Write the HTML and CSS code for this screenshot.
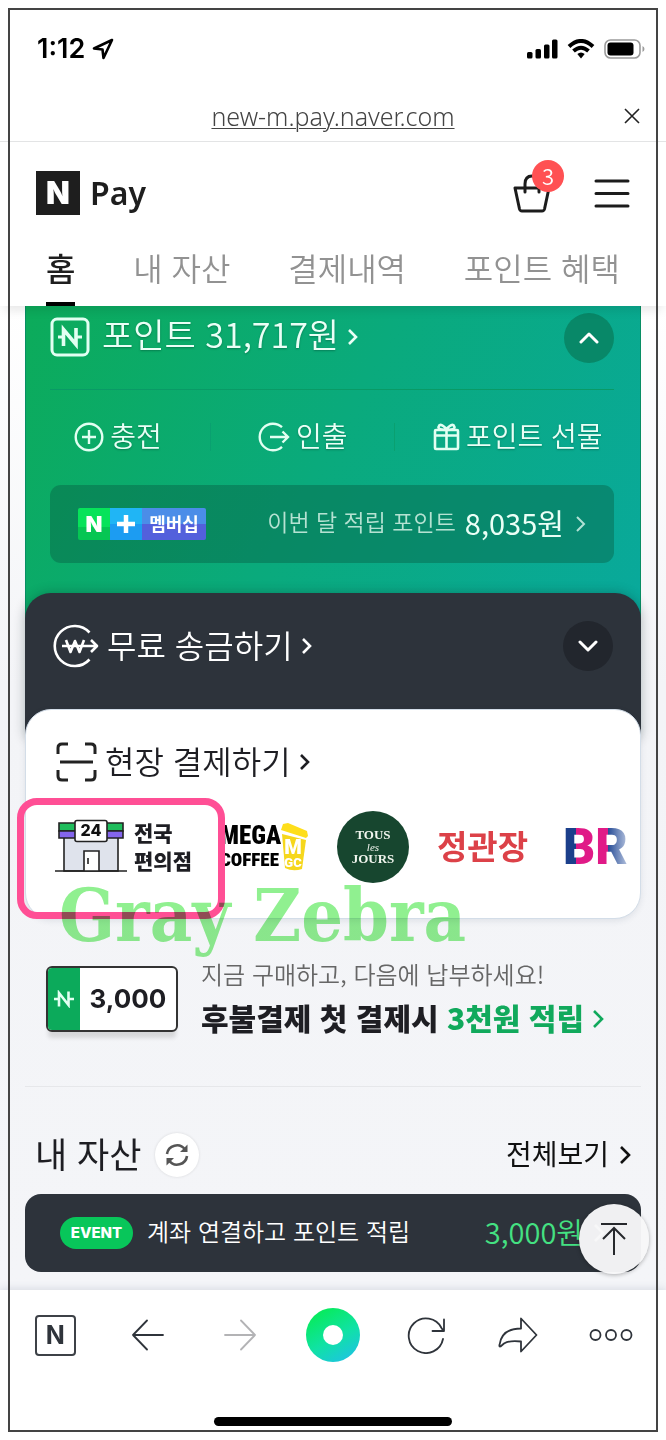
FILE: index.html
```html
<!DOCTYPE html>
<html lang="ko">
<head>
<meta charset="utf-8">
<meta name="viewport" content="width=device-width, initial-scale=1">
<title>N Pay</title>
<link rel="stylesheet" href="styles.css">
</head>
<body>
<div class="screen">
  <div class="status">
    <div class="status-time">
      <time>1:12</time>
      <svg width="22" height="22" viewBox="0 0 22 22" fill="none" stroke="#000" stroke-width="2.6" stroke-linejoin="round"><path d="M20 2 2 10.5 10.5 11.5 11.5 20Z"/></svg>
    </div>
    <div class="status-icons">
      <svg width="31" height="20" viewBox="0 0 31 20"><rect x="0" y="13" width="5.500" height="6.500" rx="1.500"/><rect x="8.500" y="10" width="5.500" height="9.500" rx="1.500"/><rect x="17" y="5.500" width="5.500" height="14" rx="1.500"/><rect x="25" y="0.500" width="5.500" height="19" rx="1.500"/></svg>
      <svg width="28" height="20" viewBox="0 0 28 20" fill="none" stroke="#000" stroke-width="4"><path d="M2 7.500Q14-3.500 26 7.500"/><path d="M6.500 12Q14 5.500 21.500 12"/><path d="M10.300 15Q14 12 17.700 15L14 19.500Z" fill="#000" stroke="none"/></svg>
      <svg width="41" height="20" viewBox="0 0 41 20" fill="none"><rect x="1" y="1" width="35" height="18" rx="5.500" stroke="#9b9b9b" stroke-width="1.600"/><rect x="3.500" y="3.500" width="26" height="13" rx="3" fill="#000"/><path d="M38.500 7v6q2-1 2-3t-2-3Z" fill="#9b9b9b"/></svg>
    </div>
  </div>

  <div class="address">
    <a class="address-url" href="#">new-m.pay.naver.com</a>
    <button class="address-close" type="button" aria-label="닫기">
      <svg width="16" height="16" viewBox="0 0 16 16" fill="none" stroke="#222" stroke-width="1.600"><path d="M1 1 15 15M15 1 1 15"/></svg>
    </button>
  </div>

  <header class="header">
    <div class="header-row">
      <a class="brand" href="#"><span class="brand-mark">N</span><span class="brand-name">Pay</span></a>
      <div class="header-tools">
        <button class="cart" type="button" aria-label="장바구니">
          <svg width="40" height="40" viewBox="0 0 40 40" fill="none" stroke="#1c1c1c" stroke-width="3" stroke-linejoin="round" stroke-linecap="round"><path d="M3 15H37L32.500 36Q32 38 30 38H10Q8 38 7.500 36Z"/><path d="M13 19V11Q13 3 20 3T27 11V19"/></svg>
          <span class="cart-count">3</span>
        </button>
        <button class="icon-button" type="button" aria-label="메뉴">
          <svg width="36" height="32" viewBox="0 0 36 32" stroke="#1c1c1c" stroke-width="3" stroke-linecap="round"><path d="M2 4H34M2 16.500H34M2 29H34"/></svg>
        </button>
      </div>
    </div>
    <nav class="tabs">
      <a class="tab tab-active" href="#">홈</a>
      <a class="tab" href="#">내 자산</a>
      <a class="tab" href="#">결제내역</a>
      <a class="tab" href="#">포인트 혜택</a>
    </nav>
  </header>

  <main class="main">
    <section class="points">
      <div class="card-row">
        <a class="card-title card-title-points" href="#">
          <svg width="40" height="40" viewBox="0 0 40 40" fill="none" stroke="#e2fff2" stroke-width="3"><rect x="2" y="2" width="36" height="36" rx="5"/><path d="M13.500 29V12.500L26 27.500V11" stroke-width="3.600"/><path d="M8 20H14M25 20H32" stroke-width="3"/></svg>
          <span>포인트 31,717원</span>
          <svg class="chevron" width="11" height="18" viewBox="0 0 11 18"><path d="M2 2 9 9 2 16"/></svg>
        </a>
        <button class="toggle toggle-green" type="button" aria-label="접기"><svg width="20" height="12" viewBox="0 0 20 12"><path d="M2 10 10 2 18 10"/></svg></button>
      </div>
      <div class="actions">
        <a class="action" href="#">
          <svg width="30" height="30" viewBox="0 0 30 30" fill="none" stroke="#e2fff2" stroke-width="2.400"><circle cx="15" cy="15" r="13.300"/><path d="M15 8V22M8 15H22"/></svg>
          <span>충전</span>
        </a>
        <a class="action" href="#">
          <svg width="32" height="30" viewBox="0 0 32 30" fill="none" stroke="#e2fff2" stroke-width="2.400"><path d="M24 5.200A13.300 13.300 0 1 0 24 24.800"/><path d="M12 15H30M24.500 9.500 30 15 24.500 20.500"/></svg>
          <span>인출</span>
        </a>
        <a class="action" href="#">
          <svg width="27" height="28" viewBox="0 0 27 28" fill="none" stroke="#e2fff2" stroke-width="2.600"><rect x="2" y="7" width="23" height="19" rx="1"/><path d="M13.500 7V26M1 12.500H26M13.500 7Q5 7 5.500 4 7-1 13.500 6 20-1 21.500 4 22 7 13.500 7"/></svg>
          <span>포인트 선물</span>
        </a>
      </div>
      <a class="membership" href="#">
        <span class="badge"><span class="badge-n">N</span><span class="badge-plus"><svg width="18" height="18" viewBox="0 0 18 18" stroke="#fff" stroke-width="4.500"><path d="M9 0V18M0 9H18"/></svg></span><span class="badge-label">멤버십</span></span>
        <span class="earned"><span class="earned-label">이번 달 적립 포인트</span><span class="earned-value">8,035원</span>
        <svg class="chevron chevron-thin" width="11" height="18" viewBox="0 0 11 18"><path d="M2 2 9 9 2 16"/></svg></span>
      </a>
    </section>

    <section class="transfer">
      <div class="card-row">
        <a class="card-title" href="#">
          <svg width="46" height="44" viewBox="0 0 46 44" fill="none" stroke="#fff" stroke-width="2.600" stroke-linejoin="round"><path d="M36.500 8.500A20 20 0 1 0 36.500 35.500"/><path d="M9 22H32M31 22H43M38 16 44 22 38 28"/><path d="M13 16 17.500 28 22 17 26.500 28 31 16"/></svg>
          <span>무료 송금하기</span>
          <svg class="chevron" width="11" height="18" viewBox="0 0 11 18"><path d="M2 2 9 9 2 16"/></svg>
        </a>
        <button class="toggle toggle-dark" type="button" aria-label="펼치기"><svg width="20" height="12" viewBox="0 0 20 12"><path d="M2 2 10 10 18 2"/></svg></button>
      </div>
    </section>

    <section class="pay">
      <a class="card-title card-title-pay" href="#">
        <svg width="42" height="40" viewBox="0 0 42 40" fill="none" stroke="#222" stroke-width="3"><path d="M3 12V6Q3 2 7 2H13M30 2H36Q40 2 40 6V12M40 28V34Q40 38 36 38H30M13 38H7Q3 38 3 34V28M5 20H38"/></svg>
        <span>현장 결제하기</span>
        <svg class="chevron" width="11" height="18" viewBox="0 0 11 18"><path d="M2 2 9 9 2 16"/></svg>
      </a>
      <div class="shops">
        <a class="shop-store" href="#">
          <svg width="72" height="54" viewBox="0 0 72 54" stroke="#222" stroke-width="1.600"><rect x="9" y="18" width="54" height="34" fill="#dfe3ec"/><path d="M4 4H68V12H4Z" fill="#1fbd5c"/><path d="M4 12H68V19H4Z" fill="#8465ec"/><rect x="20" y="1.500" width="32" height="21" rx="2" fill="#fff"/><path d="M29 52V32H44V52" fill="#fff"/><path d="M33 39V45M0 52H72"/><text class="store-sign" x="36" y="17" text-anchor="middle" stroke="none">24</text></svg>
          <span class="store-name">전국<br>편의점</span>
        </a>
        <a class="shop-mega" href="#">
          <span class="mega-words"><span class="mega-top">MEGA</span><span class="mega-bottom">COFFEE</span></span>
          <svg width="29" height="48" viewBox="0 0 29 48"><path d="M3 1 8 0 27 8 28 13 26 15 1 7Z" fill="#fede1b"/><path d="M2 11 26 17 22 46Q13 49 5 45Z" fill="#f6d71c"/><text class="mega-m" x="13" y="31" text-anchor="middle">M</text><text class="mega-gc" x="13" y="44" text-anchor="middle">GC</text></svg>
        </a>
        <a class="shop-tous" href="#"><span>TOUS</span><i>les</i><span>JOURS</span></a>
        <a class="shop-jkj" href="#">정관장</a>
        <a class="shop-br" href="#">BR</a>
      </div>
      <span class="highlight"></span>
      <span class="watermark">Gray Zebra</span>
    </section>

    <a class="promo" href="#">
      <span class="coupon">
        <span class="coupon-side"><svg width="20" height="18" viewBox="0 0 20 18" fill="none" stroke="#e2fff2" stroke-width="2.600"><path d="M5 16.500V3L14.500 15V1.500M0 9H6M14 9H20"/></svg></span>
        <span class="coupon-value">3,000</span>
      </span>
      <span class="promo-copy">
        <span class="promo-lead">지금 구매하고, 다음에 납부하세요!</span>
        <span class="promo-main"><span>후불결제 첫 결제시 <em>3천원 적립</em></span><svg class="chevron" width="12" height="20" viewBox="0 0 12 20"><path d="M2 2 10 10 2 18"/></svg></span>
      </span>
    </a>

    <section class="assets">
      <div class="assets-head">
        <h2>내 자산</h2>
        <button class="refresh" type="button" aria-label="새로고침">
          <svg width="24" height="26" viewBox="0 0 24 26" fill="none" stroke="#555" stroke-width="2.600"><path d="M2 12A10 10 0 0 1 20 7.500M22 14A10 10 0 0 1 4 18.500"/><path d="M22.500 2.500V10H15ZM1.500 23.500V16H9Z" fill="#555" stroke="none"/></svg>
        </button>
        <a class="see-all" href="#"><span>전체보기</span><svg class="chevron" width="12" height="20" viewBox="0 0 12 20"><path d="M2 2 10 10 2 18"/></svg></a>
      </div>
      <div class="event-wrap">
        <a class="event" href="#">
          <span class="event-tag">EVENT</span>
          <span class="event-text">계좌 연결하고 포인트 적립</span>
          <span class="event-amount">3,000원</span>
          <svg class="chevron" width="12" height="20" viewBox="0 0 12 20"><path d="M2 2 10 10 2 18"/></svg>
        </a>
        <button class="to-top" type="button" aria-label="맨 위로">
          <svg width="28" height="34" viewBox="0 0 28 34" fill="none" stroke="#26282c" stroke-width="2"><path d="M1 2H27M14 33V6M3 17 14 6 25 17"/></svg>
        </button>
      </div>
    </section>
  </main>

  <footer class="bottom">
    <nav class="toolbar">
      <button class="tool tool-n" type="button"><span>N</span></button>
      <button class="tool" type="button" aria-label="뒤로"><svg width="32" height="32" viewBox="0 0 32 32"><path d="M31 16H1M15 1.500 1 16 15 30.500"/></svg></button>
      <button class="tool tool-off" type="button" aria-label="앞으로"><svg width="32" height="32" viewBox="0 0 32 32"><path d="M1 16H31M17 1.500 31 16 17 30.500"/></svg></button>
      <button class="tool" type="button" aria-label="그린닷"><span class="dot"></span></button>
      <button class="tool" type="button" aria-label="새로고침"><svg width="38" height="38" viewBox="0 0 38 38"><path d="M36 23A17.300 17.300 0 1 1 34.500 12L36.500 15M37 3.500V15H25.500"/></svg></button>
      <button class="tool" type="button" aria-label="공유"><svg width="40" height="36" viewBox="0 0 40 36"><path d="M23 1.500 38.500 18 23 34.500V24.500Q12 23 6 26.500L2.500 29.500Q1 30 1.500 28 3.500 11.500 23 11.500Z"/></svg></button>
      <button class="tool" type="button" aria-label="더보기"><svg width="44" height="14" viewBox="0 0 44 14"><circle cx="6.500" cy="7" r="5"/><circle cx="22" cy="7" r="5"/><circle cx="37.500" cy="7" r="5"/></svg></button>
    </nav>
    <div class="home-bar"></div>
  </footer>
  <div class="frame"></div>
</div>
</body>
</html>
```

FILE: styles.css
```css
* { box-sizing: border-box; }
body {
  margin: 0;
  background: #fff;
  color: #1e1e23;
  font-family: "Noto Sans CJK KR", sans-serif;
  font-weight: 350;
}
a { color: inherit; text-decoration: none; }
button { padding: 0; border: 0; background: none; color: inherit; font: inherit; }
svg { display: block; flex: none; }
span { white-space: nowrap; }

.screen { position: relative; display: flex; flex-direction: column; min-height: 100vh; }
.frame { position: absolute; inset: 8px; z-index: 3; border: 2px solid #444; pointer-events: none; }

.status { display: flex; align-items: center; justify-content: space-between; height: 97px; padding: 0 21px 0 37px; }
.status-time { display: flex; align-items: center; gap: 7px; color: #000; font: 600 27px/30px Inter, sans-serif; }
.status-icons { display: flex; align-items: center; gap: 9px; }

.address { position: relative; display: flex; align-items: center; justify-content: center; height: 45px; padding-bottom: 6px; border-bottom: 1px solid #e3e4e5; }
.address-url { color: #444; font: 300 25px/32px "Noto Sans", sans-serif; text-decoration: underline; text-decoration-thickness: 1px; text-underline-offset: 2px; }
.address-close { position: absolute; right: 26px; top: 11px; }

.header { position: relative; z-index: 2; padding: 29px 36px 0; background: #fff; box-shadow: 0 8px 10px -4px rgba(0, 0, 0, .1); }
.header-row { display: flex; align-items: center; justify-content: space-between; height: 44px; }
.brand { display: flex; align-items: center; gap: 10px; color: #1e1e1e; }
.brand-mark { display: grid; place-items: center; width: 44px; height: 44px; background: #1e1e1e; color: #fff; font: 900 31px/44px Inter, sans-serif; }
.brand-name { font: 600 32px/44px "Noto Sans", sans-serif; }
.header-tools { display: flex; align-items: center; gap: 42px; }
.cart { position: relative; }
.cart-count { position: absolute; left: 20px; top: -13px; width: 32px; height: 32px; border-radius: 50%; background: #ff5153; color: #fff; font-size: 22px; line-height: 30px; text-align: center; }
.tabs { display: flex; justify-content: space-between; padding: 32px 10px 0; }
.tab { padding-bottom: 15px; border-bottom: 4px solid transparent; color: #929292; font-size: 32px; line-height: 40px; white-space: nowrap; }
.tab-active { border-color: #000; color: #1e1e1e; font-weight: 500; }

.main { flex: 1; padding: 0 25px 18px; background: linear-gradient(#fff, #f3f4f7 380px, #f4f5f8); }
.card-row { display: flex; align-items: center; justify-content: space-between; height: 50px; }
.card-title { display: flex; align-items: center; gap: 8px; font-size: 32px; line-height: 44px; }
.card-title span, .assets-head h2, .see-all span { padding-bottom: 5px; }
.card-title-points { gap: 12px; padding-bottom: 3px; font-size: 34px; }
.card-title-points .chevron { margin-left: -4px; }
.chevron { fill: none; stroke: currentColor; stroke-width: 2.600; }
.chevron-thin { stroke-width: 2; opacity: .75; }
.toggle { display: grid; place-items: center; width: 50px; height: 50px; border-radius: 50%; }
.toggle svg { fill: none; stroke: #fff; stroke-width: 3; stroke-linecap: round; stroke-linejoin: round; }
.toggle-green { background: #088868; }
.toggle-dark { background: #22262d; }

.points { padding: 7px 26px 58px 24px; border: solid #088e64; border-width: 0 1px; background: linear-gradient(118deg, #0cab5a, #0aaa7c 48%, #09a99c); color: #eafff6; text-shadow: 0 1px 2px rgba(0, 60, 40, .4); }
.actions { display: grid; grid-template-columns: 3fr 3fr 4fr; align-items: center; height: 96px; margin: 26px -26px 0 -24px; background: linear-gradient(#099a66, #099a66) 24px 0 / calc(100% - 50px) 1px no-repeat; }
.action { display: flex; align-items: center; justify-content: center; gap: 6px; height: 28px; font-size: 28px; line-height: 28px; }
.action span { padding-bottom: 4px; }
.action + .action { border-left: 1px solid #0aa070; }
.membership { display: flex; align-items: center; justify-content: space-between; height: 78px; padding: 0 28px; border-radius: 11px; background: rgba(6, 92, 66, .42); text-shadow: none; }
.badge { display: flex; height: 32px; border-radius: 2px; overflow: hidden; color: #fff; line-height: 30px; text-align: center; }
.badge-n { width: 32px; background: linear-gradient(#07e35a 60%, #06c653 60%); font: 900 22px/32px Inter, sans-serif; }
.badge-plus { display: grid; place-items: center; width: 32px; background: linear-gradient(#20b5f5 50%, #1c9cf2 50%); }
.badge-label { width: 64px; background: linear-gradient(#4b8de8 50%, #5360dc 50%); font-size: 18px; font-weight: 700; }
.earned { display: flex; align-items: center; line-height: 36px; }
.earned-label { padding-bottom: 6px; font-size: 23px; color: #b5e2d2; }
.earned-value { margin: 0 11px 0 9px; padding-bottom: 5px; font-size: 29px; font-weight: 400; }

.transfer { position: relative; margin-top: -28px; padding: 28px 28px 66px; border-radius: 26px 26px 0 0; background: #2d333b; color: #fff; box-shadow: 0 0 12px rgba(0, 30, 30, .3); }
.pay { position: relative; margin-top: -28px; padding: 32px 12px 35px 29px; border: 1px solid #d3dde8; border-radius: 26px; background: #fff; box-shadow: 0 2px 6px rgba(40, 60, 90, .1); }
.card-title-pay { height: 40px; }
.shops { display: flex; align-items: center; gap: 28px; height: 72px; margin-top: 29px; }
.shop-store { display: flex; align-items: center; gap: 7px; padding-bottom: 3px; }
.store-sign { font: 800 16px Inter, sans-serif; fill: #111; }
.store-name { font-size: 21px; font-weight: 900; line-height: 28px; }
.shop-mega { display: flex; align-items: center; color: #000; }
.mega-words { display: flex; flex-direction: column; width: 60px; font-family: "Liberation Sans Narrow", "Roboto Condensed", Roboto, sans-serif; font-weight: 900; }
.mega-top { font-size: 25px; line-height: 25px; }
.mega-bottom { font-size: 19px; line-height: 24px; }
.mega-m { font: 900 20px Roboto, sans-serif; fill: #fff; }
.mega-gc { font: 900 13px Roboto, sans-serif; fill: #fff; }
.shop-tous { display: flex; flex-direction: column; align-items: center; justify-content: center; width: 72px; height: 72px; border-radius: 50%; background: #17462f; color: #f1f5ee; font: 700 13px/14px "Liberation Serif", serif; }
.shop-tous i { font-size: 11px; font-weight: 400; line-height: 10px; }
.shop-jkj { padding-bottom: 5px; color: #dc4148; font-size: 33px; font-weight: 700; line-height: 40px; white-space: nowrap; }
.shop-br { margin-left: auto; background: linear-gradient(90deg, #1b3f8b 20%, #e01a87 20% 70%, #2a4f98 70%, #b9c6e0); -webkit-background-clip: text; background-clip: text; color: transparent; font: 900 50px/60px Roboto, sans-serif; }
.highlight { position: absolute; left: -9px; top: 88px; width: 208px; height: 121px; border: 7px solid #ff4f95; border-radius: 20px; pointer-events: none; }
.watermark { position: absolute; left: 33px; top: 160px; color: #90f090; font: 700 73px/90px "DejaVu Serif Condensed", "DejaVu Serif", serif; mix-blend-mode: multiply; pointer-events: none; }

.promo { display: flex; align-items: flex-start; gap: 23px; padding: 38px 0 44px 21px; border-bottom: 1px solid #e6e7ea; }
.coupon { display: flex; width: 132px; height: 66px; margin-top: 9px; border: 2px solid #333; border-radius: 6px; background: #fff; box-shadow: 0 8px 4px -2px rgba(0, 0, 0, .12); overflow: hidden; }
.coupon-side { display: grid; place-items: center; width: 32px; background: #0caa5b; }
.coupon-value { flex: 1; text-align: center; font: 700 26px/62px Inter, sans-serif; }
.promo-copy { display: flex; flex-direction: column; }
.promo-lead { color: #666; font-size: 24px; line-height: 34px; }
.promo-main { display: flex; align-items: center; gap: 8px; margin-top: 5px; font-size: 30px; font-weight: 900; line-height: 42px; }
.promo-main > span { padding-bottom: 4px; }
.promo-main em { color: #11a95c; font-style: normal; }
.promo-main .chevron { color: #11a95c; }

.assets-head { display: flex; align-items: center; height: 44px; margin: 46px 10px 17px 10px; }
.assets-head h2 { margin: 0; font-size: 35px; font-weight: 400; line-height: 44px; }
.refresh { display: grid; place-items: center; width: 44px; height: 44px; margin-left: 14px; border-radius: 50%; background: #fff; box-shadow: 0 0 3px rgba(0, 0, 0, .12); }
.see-all { display: flex; align-items: center; gap: 10px; margin-left: auto; color: #111; font-size: 28px; font-weight: 400; line-height: 40px; }
.event-wrap { position: relative; }
.event { display: flex; align-items: center; height: 78px; padding: 0 36px 0 35px; border-radius: 16px; background: #2d333b; color: #fff; }
.event-tag { width: 73px; height: 32px; border-radius: 16px; background: #08c65a; text-align: center; font: 800 15px/32px Inter, sans-serif; }
.event-text { margin-left: 14px; padding-bottom: 4px; font-size: 24px; line-height: 36px; }
.event-amount { margin: 0 10px 0 auto; padding-bottom: 4px; color: #44e182; font-size: 29px; line-height: 36px; }
.to-top { position: absolute; right: -8px; top: 10px; display: grid; place-items: center; width: 70px; height: 70px; border-radius: 50%; background: rgba(247, 247, 248, .97); box-shadow: 0 1px 4px rgba(0, 0, 0, .3); }

.bottom { position: relative; padding-bottom: 14px; background: #fff; box-shadow: 0 -1px 8px rgba(60, 80, 110, .16); }
.toolbar { display: grid; grid-template-columns: repeat(7, 1fr); height: 90px; padding: 0 9px; }
.tool { display: grid; place-items: center; color: #2f343b; }
.tool svg { fill: none; stroke: currentColor; stroke-width: 1.800; stroke-linejoin: round; stroke-linecap: round; }
.tool-n span { width: 41px; height: 41px; border: 2px solid #3d4147; border-radius: 4px; font: 700 25px/37px Inter, sans-serif; }
.tool-off { color: #b3b3b5; }
.dot { width: 54px; height: 54px; border: 17px solid transparent; border-radius: 50%; background: linear-gradient(#fff, #fff) padding-box, linear-gradient(150deg, #08ea60 15%, #10e2a5 55%, #20bdf0) border-box; }
.home-bar { width: 238px; height: 9px; margin: 37px auto 0; border-radius: 5px; background: #000; }
```
